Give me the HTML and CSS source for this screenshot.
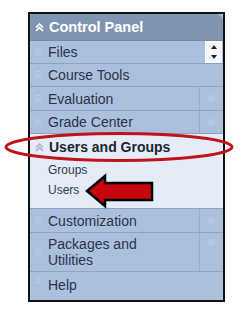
FILE: index.html
```html
<!DOCTYPE html>
<html lang="en">
<head>
  <meta charset="UTF-8" />
  <title>Control Panel</title>
  <link rel="stylesheet" href="styles.css">
</head>
<body>
  <div class="shot">
    <div class="panel">
      <div class="panel-head">
        <svg class="chev" width="9" height="9" viewBox="0 0 9 9"><path d="M1 4.5 L4.5 1 L8 4.5 M1 8 L4.5 4.5 L8 8" fill="none" stroke="#fff" stroke-width="1.6"/></svg>
        <span>Control Panel</span>
      </div>

      <div class="row">
        <span class="grip"></span>
        <span class="label">Files</span>
        <span class="scroll"><i class="up"></i><i class="down"></i></span>
      </div>
      <div class="row">
        <span class="grip"></span>
        <span class="label">Course Tools</span>
      </div>
      <div class="row wide">
        <span class="grip"></span>
        <span class="label">Evaluation</span>
        <span class="more"></span>
      </div>
      <div class="row">
        <span class="grip"></span>
        <span class="label">Grade Center</span>
        <span class="more"></span>
      </div>

      <div class="open">
        <div class="open-head">
          <svg class="chev" width="9" height="9" viewBox="0 0 9 9"><path d="M1 4.5 L4.5 1 L8 4.5 M1 8 L4.5 4.5 L8 8" fill="none" stroke="#a9b3c2" stroke-width="1.6"/></svg>
          <span>Users and Groups</span>
        </div>
        <div class="sub">Groups</div>
        <div class="sub">Users</div>
      </div>

      <div class="row wide">
        <span class="grip"></span>
        <span class="label">Customization</span>
        <span class="more"></span>
      </div>
      <div class="row tall">
        <span class="grip"></span>
        <span class="label">Packages and<br>Utilities</span>
        <span class="more"></span>
      </div>
      <div class="row last">
        <span class="grip"></span>
        <span class="label">Help</span>
      </div>
    </div>
  </div>

  <!-- annotations drawn over the screenshot -->
  <svg class="ring" width="245" height="40" viewBox="0 0 245 40">
    <ellipse cx="119" cy="20" rx="113" ry="13.5" fill="none" stroke="#c0141c" stroke-width="3"/>
  </svg>
  <svg class="arrow" width="72" height="38" viewBox="0 0 72 38">
    <path d="M2 19 L20 4 L20 11 L67 11 L67 28 L20 28 L20 34 Z" fill="#c8060e" stroke="#000" stroke-width="2.5" stroke-linejoin="miter"/>
  </svg>
</body>
</html>
```

FILE: styles.css
```css
* {
  margin: 0;
  padding: 0;
  box-sizing: border-box;
}

body {
  width: 245px;
  height: 312px;
  background: #fff;
  font-family: 'Liberation Sans', Arial, sans-serif;
  color: #2a3347;
  position: relative;
  overflow: hidden;
}

.shot {
  margin: 12px 0 0 28px;
  width: 197px;
  height: 290px;
  border: 2px solid #111;
  background: #fff;
}

.panel {
  height: 100%;
  display: flex;
  flex-direction: column;
  background: #abc0dd;
}

.panel-head {
  height: 27px;
  display: flex;
  align-items: center;
  background: #8095b1;
  color: #fff;
  font-weight: bold;
  font-size: 14.5px;
  border-radius: 2px 7px 0 0;
  border-bottom: 1px solid #7689a5;
}

.chev {
  margin: 0 5px 0 5px;
  flex: none;
}

.row {
  height: 23px;
  display: flex;
  align-items: center;
  border-bottom: 1px solid #8ea3c1;
  font-size: 14px;
  position: relative;
}

.row.wide {
  height: 24px;
}

.row.tall {
  height: 39px;
  line-height: 16px;
}

.row.last {
  flex: 1;
  border-bottom: none;
  align-items: flex-start;
  padding-top: 5px;
}

.grip {
  width: 6px;
  height: 8px;
  margin: 0 7px 0 5px;
  background: repeating-linear-gradient(#c0d0e6 0 1px, transparent 1px 2px);
  opacity: 0.7;
}

.label {
  flex: 1;
}

.scroll {
  align-self: stretch;
  width: 17px;
  margin-right: 1px;
  background: #f4f6f9;
  display: flex;
  flex-direction: column;
  align-items: center;
  justify-content: center;
  gap: 6px;
}

.scroll i {
  width: 0;
  height: 0;
  border-left: 3px solid transparent;
  border-right: 3px solid transparent;
}

.scroll .up {
  border-bottom: 4px solid #222;
}

.scroll .down {
  border-top: 4px solid #222;
}

.more {
  align-self: stretch;
  width: 24px;
  border-left: 1px solid #98acc8;
  display: flex;
  align-items: center;
  justify-content: center;
}

.row.tall .more {
  align-items: flex-start;
  padding-top: 6px;
}

.more::after {
  content: "";
  width: 7px;
  height: 7px;
  border-radius: 2px;
  background: #b6c7e0;
}

.open {
  height: 75px;
  background: #e4ecf7;
  border-bottom: 1px solid #8ea3c1;
}

.open-head {
  height: 26px;
  display: flex;
  align-items: center;
  font-weight: bold;
  font-size: 14px;
  color: #1d2333;
}

.sub {
  font-size: 12px;
  padding-left: 18px;
  height: 20px;
  line-height: 20px;
  color: #333a48;
}

.ring {
  position: absolute;
  left: 0;
  top: 127px;
}

.arrow {
  position: absolute;
  left: 85px;
  top: 172px;
}
```
